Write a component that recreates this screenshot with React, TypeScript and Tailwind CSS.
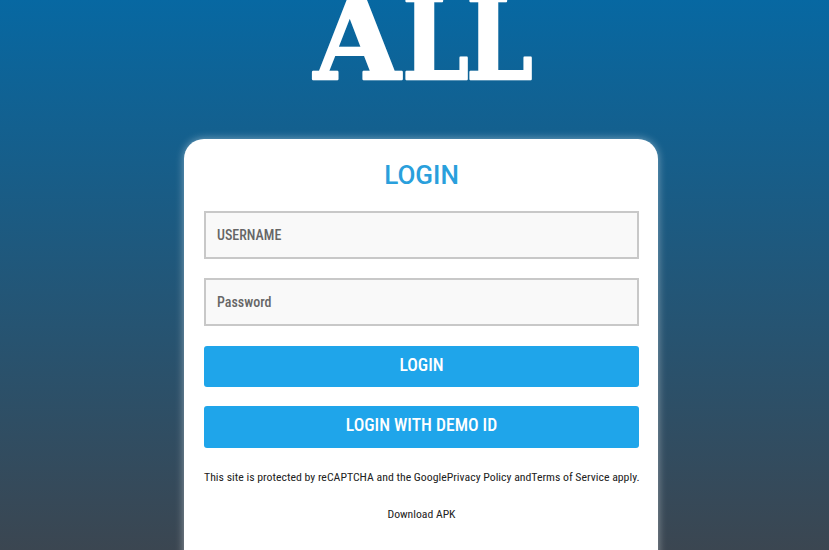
function Logo() {
  const glyph = { fontFamily: "'DejaVu Serif', serif", fontWeight: 700, fontSize: 116 }
  return (
    <svg width="829" height="139" className="block">
      <g fill="white" stroke="white" strokeWidth="2.5" strokeLinejoin="round" style={glyph}>
        <text transform="translate(314 79) scale(0.96 1)">A</text>
        <text transform="translate(402 79) scale(0.82 1)">L</text>
        <text transform="translate(466 79) scale(0.82 1)">L</text>
      </g>
    </svg>
  )
}

export default function App() {
  return (
    <div className="h-[550px] overflow-hidden bg-linear-to-b/srgb from-[#0768a2] to-[#3b4651] font-['Roboto',sans-serif]">
      <Logo />
      <div className="ml-[184px] w-[474px] h-[440px] bg-white rounded-[20px] pl-5 pr-[19px] pt-5 shadow-[0_0_8px_rgba(255,255,255,0.45)]">
        <h1 className="text-center text-[#2a9fdc] text-[26px] leading-[32px] font-medium">LOGIN</h1>
        <div className="mt-[20px] h-[48px] border-2 border-[#c8c8c8] bg-[#f9f9f9] flex items-center px-[11px] text-[14px] font-medium text-[#666]">
          <span className="[font-stretch:75%]">USERNAME</span>
        </div>
        <div className="mt-[19px] h-[48px] border-2 border-[#c8c8c8] bg-[#f9f9f9] flex items-center px-[11px] text-[14px] font-medium text-[#666]">
          <span className="[font-stretch:75%]">Password</span>
        </div>
        <button className="mt-[20px] w-full h-[41px] pb-[2px] bg-[#1fa5ea] rounded-[3px] text-white text-[17.6px] font-medium [font-stretch:75%]">LOGIN</button>
        <button className="mt-[19px] w-full h-[42px] pb-[3px] bg-[#1fa5ea] rounded-[3px] text-white text-[17.6px] font-medium [font-stretch:75%]">LOGIN WITH DEMO ID</button>
        <p className="mt-[21px] text-center text-[11.8px] leading-[16px] text-[#222] whitespace-nowrap [font-stretch:75%]">
          This site is protected by reCAPTCHA and the GooglePrivacy Policy andTerms of Service apply.
        </p>
        <p className="mt-[21px] text-center text-[11.7px] leading-[16px] text-[#222] [font-stretch:75%]">Download APK</p>
      </div>
    </div>
  )
}
